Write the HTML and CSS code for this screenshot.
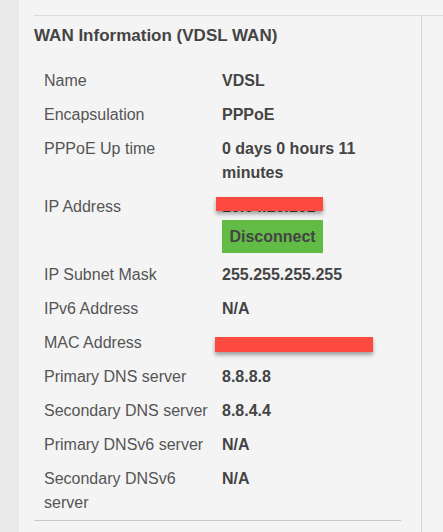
FILE: index.html
```html
<!DOCTYPE html>
<html>
<head>
<meta charset="utf-8">
<link rel="stylesheet" href="styles.css">
</head>
<body>
<div class="page">
  <div class="wrap">
    <div class="main">
      <h2 class="title">WAN Information (VDSL WAN)</h2>
      <div class="info">
        <div class="row"><div class="label">Name</div><div class="value">VDSL</div></div>
        <div class="row"><div class="label">Encapsulation</div><div class="value">PPPoE</div></div>
        <div class="row"><div class="label">PPPoE Up time</div><div class="value">0 days 0 hours 11 minutes</div></div>
        <div class="row"><div class="label">IP Address</div><div class="value"><div class="redact-wrap"><span>10.64.10.101</span><span class="redact redact-ip"></span></div><button class="btn">Disconnect</button></div></div>
        <div class="row"><div class="label">IP Subnet Mask</div><div class="value">255.255.255.255</div></div>
        <div class="row"><div class="label">IPv6 Address</div><div class="value">N/A</div></div>
        <div class="row"><div class="label">MAC Address</div><div class="value"><div class="redact-wrap">&nbsp;<span class="redact redact-mac"></span></div></div></div>
        <div class="row"><div class="label">Primary DNS server</div><div class="value">8.8.8.8</div></div>
        <div class="row"><div class="label">Secondary DNS server</div><div class="value">8.8.4.4</div></div>
        <div class="row"><div class="label">Primary DNSv6 server</div><div class="value">N/A</div></div>
        <div class="row"><div class="label">Secondary DNSv6 server</div><div class="value">N/A</div></div>
      </div>
    </div>
  </div>
</div>
</body>
</html>
```

FILE: styles.css
```css
html, body {
  margin: 0;
  padding: 0;
}
body {
  background: #eaeaea;
  font-family: "Liberation Sans", Arial, sans-serif;
}
.page {
  margin-left: 19px;
  min-height: 532px;
  background: #f4f4f4;
  padding: 15px 0 0 15px;
  box-sizing: border-box;
}
.wrap {
  border-top: 1px solid #dcdcdc;
  display: flex;
  min-height: 516px;
}
.main {
  width: 387px;
  border-right: 1px solid #d6d6d6;
}
.title {
  margin: 10px 0 18px 0;
  font-size: 17px;
  line-height: 20px;
  font-weight: bold;
  color: #444;
}
.info {
  width: 367px;
  border-bottom: 1px solid #c9c9c9;
}
.row {
  display: grid;
  grid-template-columns: 188px 1fr;
  padding: 5px 0;
  font-size: 16px;
  line-height: 24px;
}
.label {
  padding: 0 10px;
  color: #555;
}
.value {
  font-weight: bold;
  color: #444;
}
.redact-wrap {
  position: relative;
}
.redact {
  position: absolute;
  background: #fc4a40;
  box-shadow: 0 3px 4px rgba(0, 0, 0, 0.35);
}
.redact-ip {
  left: -6px;
  top: 2px;
  width: 107px;
  height: 14px;
}
.redact-mac {
  left: -7px;
  top: 6px;
  width: 158px;
  height: 15px;
}
.btn {
  display: block;
  margin-top: 1px;
  border: none;
  background: #62bb44;
  color: #444;
  font-family: "Liberation Sans", Arial, sans-serif;
  font-size: 16px;
  font-weight: bold;
  line-height: 19px;
  padding: 7px 7px;
  width: 101px;
}
```
